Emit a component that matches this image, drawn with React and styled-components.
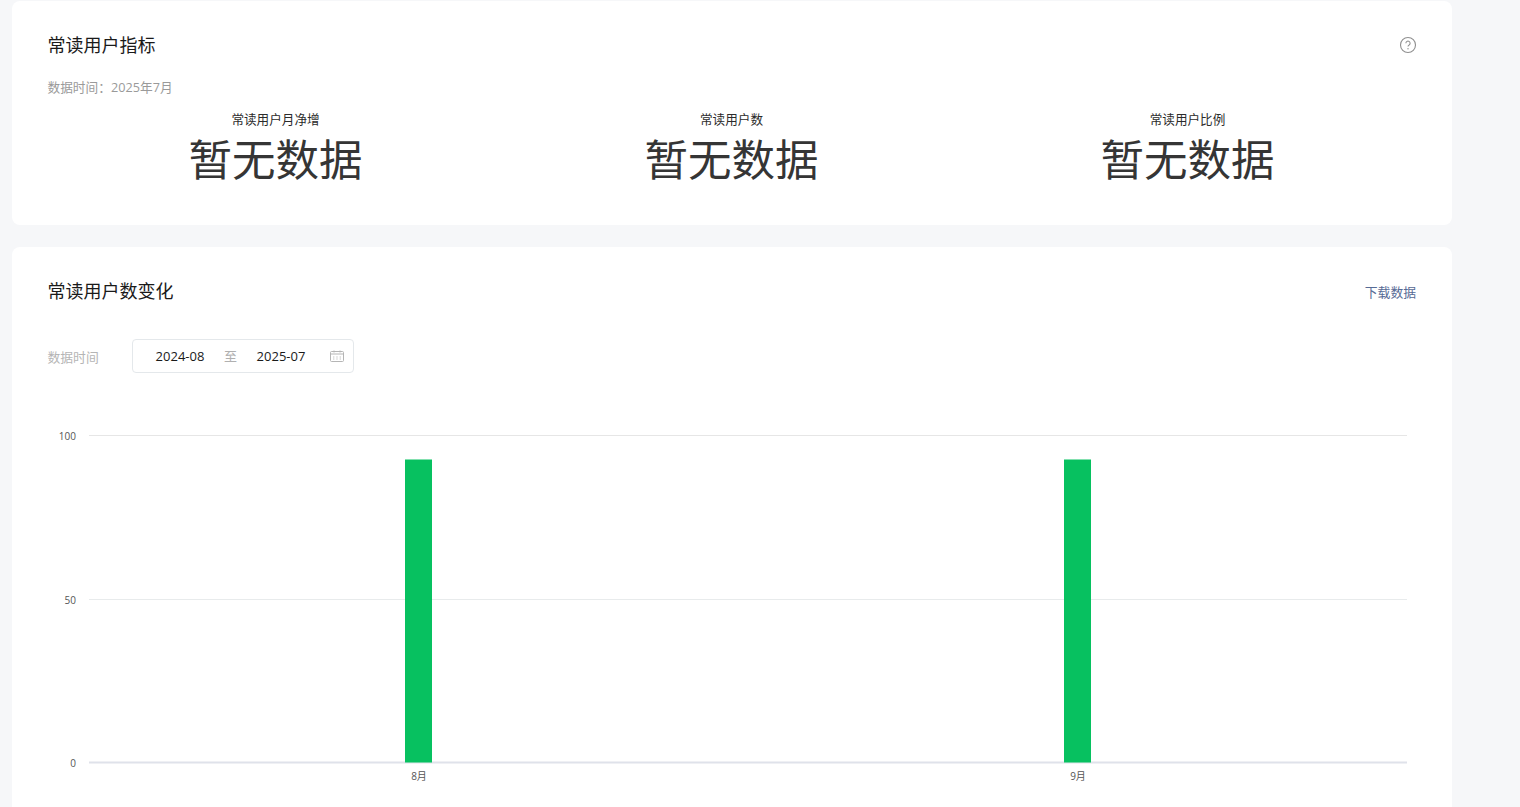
import React from "react";
import styled, { createGlobalStyle } from "styled-components";

const Global = createGlobalStyle`
  html, body { margin: 0; height: 100%; overflow: hidden; background: #f6f7f9; }
  body { font-family: "Open Sans", "Noto Sans CJK SC", sans-serif; }
`;
const Page = styled.div`
  display: flex; flex-direction: column; gap: 22px;
  width: 1440px; padding: 1px 0 0 12px;
`;
const Card = styled.section`
  background: #fff; border-radius: 8px;
  padding: ${p => p.$padding};
  height: ${p => p.$height}px; box-sizing: border-box;
`;
const Head = styled.header`
  display: flex; justify-content: space-between; align-items: center; height: 24px;
`;
const Title = styled.h2`
  margin: 0; font-size: 18px; font-weight: 400; color: #1a1a1a; line-height: 24px;
`;
const Note = styled.div`
  margin-top: 19.5px; font-size: 12.7px; line-height: 20px; color: #9a9a9a;
`;
const Metrics = styled.div`
  display: grid; grid-template-columns: repeat(3, 456px); margin-top: 14.5px;
`;
const Metric = styled.div`
  display: flex; flex-direction: column; align-items: center;
`;
const MetricLabel = styled.div`
  font-size: 12.6px; line-height: 18px; color: #2b2b2b;
`;
const MetricValue = styled.div`
  font-size: 43.5px; line-height: 58px; margin-top: 2px; color: #353535;
`;
const HelpIcon = styled.svg`
  display: block; width: 18px; height: 18px; margin-right: -1px;
`;
const Download = styled.a`
  font-size: 12.8px; line-height: 20px; color: #576b95; margin-top: 2px;
`;
const Filter = styled.div`
  display: flex; align-items: center; margin-top: 36px;
`;
const FilterLabel = styled.div`
  width: 84.5px; font-size: 12.8px; line-height: 20px; color: #b5b5b5; padding-top: 1px;
`;
const DateRange = styled.div`
  display: flex; align-items: center; box-sizing: border-box;
  width: 222px; height: 34px; border: 1px solid #e4e8eb; border-radius: 4px;
  padding: 0 9px 1px 22px; font-size: 13px; color: #1a1a1a;
`;
const Sep = styled.span`
  width: 51px; text-align: center; color: #b0b0b0; font-size: 13px;
`;
const DateText = styled.span`
  width: 50px; white-space: nowrap; text-align: center;
`;
const CalIcon = styled.svg`
  display: block; width: 14px; height: 12px; margin: 1px 0 0 auto;
`;
const ChartSvg = styled.svg`
  display: block; width: 1384px; height: 420px; margin: 44px 0 0 -3.5px;
`;
const Axis = styled.text`
  font-family: "Open Sans", "Noto Sans CJK SC", sans-serif; font-size: 10px; fill: #555;
`;

function Chart() {
  // Origin of the svg is at page (44, 417).
  const ox = 44, oy = 417;
  const grid = [[100, 436, "#e6e6e6"], [50, 600, "#e8ebec"], [0, 763, "#dfe2ea"]];
  const bars = [[405, "8月", 419], [1064, "9月", 1078]];
  return (
    <ChartSvg viewBox={`${ox} ${oy} 1384 420`}>
      {grid.map(([v, y, c]) => (
        <g key={v}>
          <line x1="89" x2="1407" y1={y - 0.5} y2={y - 0.5} stroke={c} strokeWidth={v === 0 ? 2 : 1} />
          <Axis x="76" y={y + 4} textAnchor="end">{v}</Axis>
        </g>
      ))}
      {bars.map(([x, label, cx]) => (
        <g key={label}>
          <rect x={x} y="459.5" width="27" height="303" fill="#07c160" />
          <Axis x={cx} y="780" textAnchor="middle">{label}</Axis>
        </g>
      ))}
    </ChartSvg>
  );
}

export default function App() {
  return (
    <Page>
      <Global />
      <Card $padding="32px 36px 0 35.5px" $height={224}>
        <Head>
          <Title>常读用户指标</Title>
          <HelpIcon viewBox="0 0 18 18" fill="none">
            <circle cx="9" cy="9" r="7.5" stroke="#8f8f8f" strokeWidth="1.1" />
            <path d="M6.9 7.2a2.1 2.1 0 1 1 3.2 1.8c-.7.4-1.1.8-1.1 1.6" stroke="#8f8f8f" strokeWidth="1.1" />
            <circle cx="9" cy="12.7" r=".7" fill="#8f8f8f" />
          </HelpIcon>
        </Head>
        <Note>数据时间：2025年7月</Note>
        <Metrics>
          {["常读用户月净增", "常读用户数", "常读用户比例"].map(label => (
            <Metric key={label}>
              <MetricLabel>{label}</MetricLabel>
              <MetricValue>暂无数据</MetricValue>
            </Metric>
          ))}
        </Metrics>
      </Card>
      <Card $padding="32px 36px 0 35.5px" $height={600}>
        <Head>
          <Title>常读用户数变化</Title>
          <Download>下载数据</Download>
        </Head>
        <Filter>
          <FilterLabel>数据时间</FilterLabel>
          <DateRange>
            <DateText>2024-08</DateText>
            <Sep>至</Sep>
            <DateText>2025-07</DateText>
            <CalIcon viewBox="0 0 14 12" fill="none">
              <rect x=".5" y="1.5" width="13" height="10" rx="1" stroke="#b5b5b5" />
              <path d="M.5 4h13M4 .5v2M10 .5v2" stroke="#b5b5b5" />
              <path d="M3 7h1.4M6.3 7h1.4M9.6 7H11M3 9h1.4M6.3 9h1.4M9.6 9H11" stroke="#c4c4c4" />
            </CalIcon>
          </DateRange>
        </Filter>
        <Chart />
      </Card>
    </Page>
  );
}
